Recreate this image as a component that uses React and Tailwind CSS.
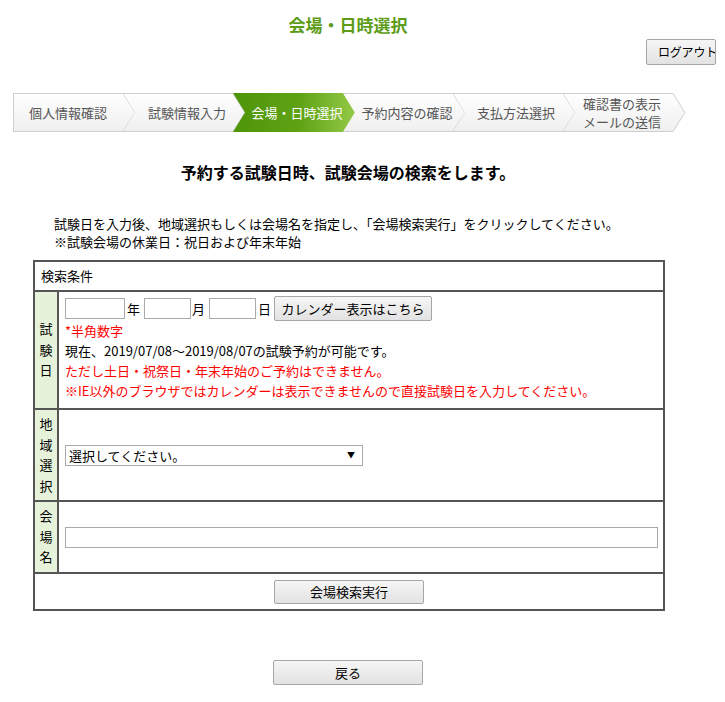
import { useState } from 'react';

const steps = [
   { label: '個人情報確認', pad: 'pl-0', first: true },
   { label: '試験情報入力', pad: 'pl-[18px]' },
   { label: '会場・日時選択', pad: 'pl-[18px]', active: true },
   { label: '予約内容の確認', pad: 'pl-[18px]' },
   { label: '支払方法選択', pad: 'pl-[16px]' },
   { lines: ['確認書の表示', 'メールの送信'], pad: 'pl-[8px]' },
];

function Step({ step, index }) {
   const fillPath = step.first
      ? 'M0,0 H110 L122,19.5 L110,39 H0 Z'
      : 'M0,0 H110 L122,19.5 L110,39 H0 L12,19.5 Z';
   const gid = 'stepfill' + index;

   return (
      <div className="relative w-[110px] h-[39px] shrink-0">
         <svg
            className="absolute left-0 top-0 overflow-visible"
            width="123"
            height="39"
            viewBox="0 0 123 39"
         >
            <defs>
               {step.active ? (
                  <linearGradient id={gid} x1="0" y1="0" x2="1" y2="0">
                     <stop offset="0" stopColor="#4f9508" />
                     <stop offset="0.55" stopColor="#5fa315" />
                     <stop offset="1" stopColor="#94c947" />
                  </linearGradient>
               ) : (
                  <linearGradient id={gid} x1="0" y1="0" x2="0" y2="1">
                     <stop offset="0" stopColor="#ffffff" />
                     <stop offset="1" stopColor="#efefef" />
                  </linearGradient>
               )}
            </defs>
            <path d={fillPath} fill={'url(#' + gid + ')'} />
            {!step.active && (
               <>
                  <path
                     d="M0,0.5 H110 M0,38.5 H110"
                     stroke="#cfcfcf"
                     strokeWidth="1"
                     fill="none"
                  />
                  <path
                     d="M110,0.5 L122,19.5 L110,38.5"
                     stroke="#cfcfcf"
                     strokeWidth="1"
                     fill="none"
                  />
                  {step.first && (
                     <path d="M0.5,0 V39" stroke="#cfcfcf" strokeWidth="1" />
                  )}
               </>
            )}
         </svg>
         <div
            className={
               'relative flex h-full w-[110px] flex-col items-center justify-center text-[13px] whitespace-nowrap ' +
               step.pad +
               (step.lines ? ' leading-[18px]' : ' leading-[17px]') +
               (step.active ? ' text-white' : ' text-[#555]')
            }
         >
            {step.lines
               ? step.lines.map((l) => <span key={l}>{l}</span>)
               : step.label}
         </div>
      </div>
   );
}

function GrayButton({ children, className }) {
   return (
      <button
         className={
            'rounded-[2px] border border-[#a6a6a6] bg-gradient-to-b from-[#f6f6f6] to-[#e2e2e2] text-[13px] text-black ' +
            className
         }
      >
         {children}
      </button>
   );
}

function Label({ chars }) {
   return (
      <div className="w-[24px] shrink-0 bg-[#e6f2da] border-r-2 border-[#555] flex flex-col items-center justify-center text-[13px] leading-[20.5px]">
         {chars.split('').map((c, i) => (
            <span key={i}>{c}</span>
         ))}
      </div>
   );
}

export default function App() {
   const [area, setArea] = useState('');

   return (
      <div
         className="relative w-[725px] min-h-[702px] bg-white text-black"
         style={{ fontFamily: '"Noto Sans CJK JP", "Liberation Sans", sans-serif' }}
      >
         <div className="w-[696px] pt-[15px] text-center text-[17px] leading-[20px] font-bold text-[#5c9c17]">
            会場・日時選択
         </div>

         <div className="mt-[4px] flex justify-end pr-[9px]">
            <button className="w-[70px] h-[26px] overflow-hidden whitespace-nowrap rounded-[2px] border border-[#a6a6a6] bg-gradient-to-b from-[#f6f6f6] to-[#e2e2e2] pl-[11px] text-left text-[12px] tracking-[-0.2px]">
               ログアウト
            </button>
         </div>

         <div className="mt-[28px] ml-[13px] flex">
            {steps.map((s, i) => (
               <Step key={i} step={s} index={i} />
            ))}
         </div>

         <div className="w-[696px] mt-[30px] text-center text-[16px] leading-[20px] font-bold">
            予約する試験日時、試験会場の検索をします。
         </div>

         <div className="mt-[33px] pl-[54px] text-[13px] leading-[18px]">
            <p>試験日を入力後、地域選択もしくは会場名を指定し、「会場検索実行」をクリックしてください。</p>
            <p>※試験会場の休業日：祝日および年末年始</p>
         </div>

         <div className="ml-[33px] mt-[9px] w-[632px] border-2 border-[#555] text-[13px]">
            <div className="h-[30px] border-b-2 border-[#555] pl-[6px] flex items-center">
               検索条件
            </div>

            <div className="flex h-[118px] border-b-2 border-[#555]">
               <Label chars="試験日" />
               <div className="flex-1 pl-[6px] pt-[4px] leading-[20px]">
                  <div className="flex items-center h-[25px]">
                     <input className="w-[60px] h-[21px] border border-[#aaa]" />
                     <span className="ml-[2px] mr-[4px]">年</span>
                     <input className="w-[47px] h-[21px] border border-[#aaa]" />
                     <span className="ml-[1px] mr-[4px]">月</span>
                     <input className="w-[47px] h-[21px] border border-[#aaa]" />
                     <span className="ml-[2px] mr-[3px]">日</span>
                     <GrayButton className="w-[158px] h-[25px]">
                        カレンダー表示はこちら
                     </GrayButton>
                  </div>
                  <p className="text-[#f00]">*半角数字</p>
                  <p>現在、2019/07/08～2019/08/07の試験予約が可能です。</p>
                  <p className="text-[#f00]">ただし土日・祝祭日・年末年始のご予約はできません。</p>
                  <p className="text-[#f00]">
                     ※IE以外のブラウザではカレンダーは表示できませんので直接試験日を入力してください。
                  </p>
               </div>
            </div>

            <div className="flex h-[92px] border-b-2 border-[#555]">
               <Label chars="地域選択" />
               <div className="flex-1 pl-[6px] flex items-center">
                  <div className="relative w-[298px] h-[21px]">
                     <select
                        value={area}
                        onChange={(e) => setArea(e.target.value)}
                        className="w-full h-full appearance-none border border-[#aaa] bg-white pl-[3px] text-[13px] leading-[19px] outline-none"
                     >
                        <option value="">選択してください。</option>
                        <option value="tokyo">東京</option>
                        <option value="osaka">大阪</option>
                     </select>
                     <span className="pointer-events-none absolute right-[8px] top-[4px] text-[8px] leading-[12px]">
                        ▼
                     </span>
                  </div>
               </div>
            </div>

            <div className="flex h-[72px] border-b-2 border-[#555]">
               <Label chars="会場名" />
               <div className="flex-1 pl-[6px] pr-[5px] flex items-center">
                  <input className="w-[593px] h-[21px] border border-[#aaa]" />
               </div>
            </div>

            <div className="h-[35px] flex items-center justify-center">
               <GrayButton className="w-[150px] h-[24px]">会場検索実行</GrayButton>
            </div>
         </div>

         <div className="w-[696px] mt-[49px] flex justify-center">
            <GrayButton className="w-[150px] h-[25px]">戻る</GrayButton>
         </div>
      </div>
   );
}
